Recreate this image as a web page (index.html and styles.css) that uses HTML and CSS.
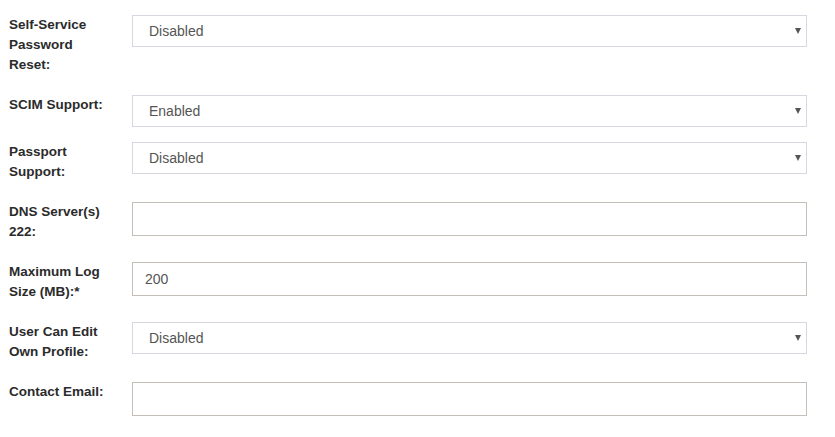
FILE: index.html
```html
<!DOCTYPE html>
<html lang="en">
  <head>
    <meta charset="UTF-8" />
    <title>Settings</title>
    <link rel="stylesheet" href="styles.css">
  </head>
  <body>
    <form class="settings-form">
      <div class="form-group">
        <label class="field-label">Self-Service Password Reset:</label>
        <div class="select-wrap">
          <select class="field-select">
            <option>Disabled</option>
            <option>Enabled</option>
          </select>
          <span class="select-arrow"></span>
        </div>
      </div>

      <div class="form-group">
        <label class="field-label">SCIM Support:</label>
        <div class="select-wrap">
          <select class="field-select">
            <option>Enabled</option>
            <option>Disabled</option>
          </select>
          <span class="select-arrow"></span>
        </div>
      </div>

      <div class="form-group">
        <label class="field-label">Passport Support:</label>
        <div class="select-wrap">
          <select class="field-select">
            <option>Disabled</option>
            <option>Enabled</option>
          </select>
          <span class="select-arrow"></span>
        </div>
      </div>

      <div class="form-group">
        <label class="field-label">DNS Server(s) 222:</label>
        <input class="field-input" type="text" value="" />
      </div>

      <div class="form-group">
        <label class="field-label">Maximum Log Size (MB):*</label>
        <input class="field-input" type="text" value="200" />
      </div>

      <div class="form-group">
        <label class="field-label">User Can Edit Own Profile:</label>
        <div class="select-wrap">
          <select class="field-select">
            <option>Disabled</option>
            <option>Enabled</option>
          </select>
          <span class="select-arrow"></span>
        </div>
      </div>

      <div class="form-group">
        <label class="field-label">Contact Email:</label>
        <input class="field-input" type="text" value="" />
      </div>
    </form>
  </body>
</html>
```

FILE: styles.css
```css
* {
  margin: 0;
  padding: 0;
  box-sizing: border-box;
}

body {
  background: white;
  font-family: "Liberation Sans", Arial, sans-serif;
  color: #333;
}

.settings-form {
  width: 807px;
  padding: 15px 0 0 9px;
}

.form-group {
  display: grid;
  grid-template-columns: 123px 1fr;
  align-items: start;
  margin-bottom: 15px;
}

.field-label {
  display: block;
  padding-right: 22px;
  margin-bottom: 5px;
  font-size: 13.5px;
  font-weight: bold;
  line-height: 20px;
  color: #2b2b2b;
}

.select-wrap {
  position: relative;
}

.field-select {
  display: block;
  width: 100%;
  height: 32px;
  padding: 0 30px 0 16px;
  border: 1px solid #d5d8e0;
  border-radius: 0;
  background: white;
  font-family: inherit;
  font-size: 14px;
  color: #555;
  appearance: none;
  -webkit-appearance: none;
  outline: none;
}

.select-arrow {
  position: absolute;
  top: 13px;
  right: 6px;
  width: 0;
  height: 0;
  border-left: 3px solid transparent;
  border-right: 3px solid transparent;
  border-top: 6px solid #555;
}

.field-input {
  display: block;
  width: 100%;
  height: 34px;
  padding: 0 12px;
  border: 1px solid #c4c0b9;
  border-radius: 0;
  background: white;
  font-family: inherit;
  font-size: 14px;
  color: #555;
  outline: none;
}
```
